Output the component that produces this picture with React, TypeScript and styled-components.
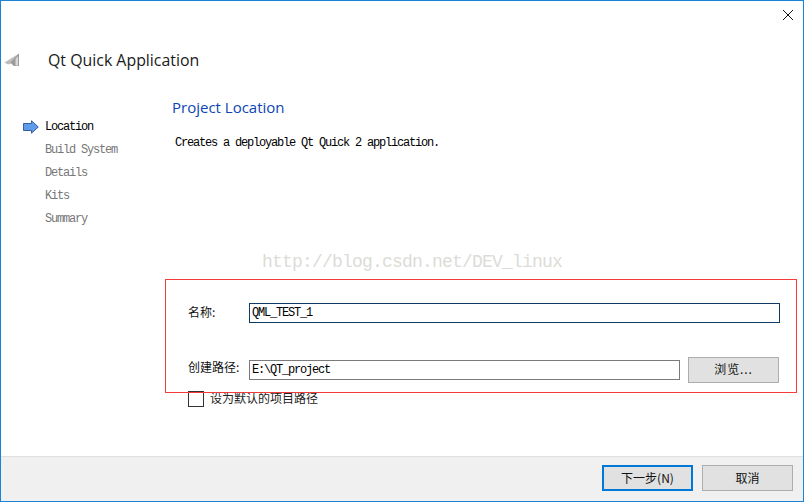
import React from "react";
import styled, { createGlobalStyle } from "styled-components";

const GlobalStyle = createGlobalStyle`
  html, body { margin: 0; padding: 0; background: #fff; }
`;

const mono = `"Liberation Mono", "Noto Sans CJK SC", monospace`;
const cjk = `"Noto Sans CJK SC", "Noto Sans", sans-serif`;

const steps = ["Location", "Build System", "Details", "Kits", "Summary"];

const App = () => {
  return (
    <Window>
      <GlobalStyle />
      <CloseIcon viewBox="0 0 12 12">
        <path d="M1 1l10 10M11 1L1 11" />
      </CloseIcon>
      <Header>
        <PlaneIcon viewBox="0 0 16 14">
          <path d="M0.5 9.5 15 0.5V13H10L7.5 10.5 4 11.5Z" fill="#bdbdbd" />
          <path d="M15 0.5 6.5 9.5 10 13H15Z" fill="#9a9a9a" />
          <path d="M11.5 6V12.5H14V3Z" fill="#d8d8d8" />
        </PlaneIcon>
        <Title>Qt Quick Application</Title>
      </Header>
      <Body>
        <Sidebar>
          {steps.map((s, i) => (
            <Step key={s} $active={i === 0}>
              <StepMarker>
                {i === 0 && (
                  <svg width="16" height="14" viewBox="0 0 16 14">
                    <path
                      d="M0.5 3.5H8.5V0.8L15.3 7 8.5 13.2V10.5H0.5Z"
                      fill="#5f9bea"
                      stroke="#34609f"
                    />
                  </svg>
                )}
              </StepMarker>
              {s}
            </Step>
          ))}
        </Sidebar>
        <Main>
          <PageTitle>Project Location</PageTitle>
          <Description>Creates a deployable Qt Quick 2 application.</Description>
          <Form>
            <Row>
              <Label $lift={4}>名称:</Label>
              <TextField $focused value="QML_TEST_1" readOnly />
            </Row>
            <PathRow>
              <Label $lift={8}>创建路径:</Label>
              <TextField value="E:\QT_project" readOnly />
              <BrowseButton>浏览...</BrowseButton>
            </PathRow>
            <CheckRow>
              <CheckBox />
              <CheckText>设为默认的项目路径</CheckText>
            </CheckRow>
          </Form>
        </Main>
      </Body>
      <Footer>
        <FooterButton $primary>下一步(N)</FooterButton>
        <FooterButton>取消</FooterButton>
      </Footer>
      <Watermark>http://blog.csdn.net/DEV_linux</Watermark>
      <RedBox />
    </Window>
  );
};

export default App;

const Window = styled.div`
  position: relative;
  box-sizing: border-box;
  width: 804px;
  height: 502px;
  border: 1px solid #1883d7;
  background: #fff;
  display: flex;
  flex-direction: column;
  overflow: hidden;
`;

const CloseIcon = styled.svg`
  position: absolute;
  top: 8px;
  right: 9px;
  width: 12px;
  height: 12px;
  fill: none;
  stroke: #111;
  stroke-width: 1;
`;

const Header = styled.div`
  height: 83px;
  flex: none;
  display: flex;
  align-items: center;
  padding: 34px 0 0 3px;
  box-sizing: border-box;
`;

const PlaneIcon = styled.svg`
  width: 16px;
  height: 14px;
  flex: none;
`;

const Title = styled.div`
  margin-left: 28px;
  font: 400 15.9px "Open Sans", "Noto Sans", sans-serif;
  color: #1a1a1a;
`;

const Body = styled.div`
  flex: 1;
  display: flex;
  min-height: 0;
`;

const Sidebar = styled.div`
  width: 171px;
  flex: none;
  padding-top: 31px;
  box-sizing: border-box;
`;

const Step = styled.div<{ $active?: boolean }>`
  display: flex;
  align-items: center;
  height: 23px;
  padding-left: 22px;
  font: 400 12px ${mono};
  letter-spacing: -1.2px;
  color: ${(p) => (p.$active ? "#000" : "#777")};
`;

const StepMarker = styled.span`
  width: 22px;
  flex: none;
  display: flex;
  align-items: center;
`;

const Main = styled.div`
  flex: 1;
  min-width: 0;
`;

const PageTitle = styled.div`
  margin-top: 11px;
  font: 400 15px "Open Sans", "Noto Sans", sans-serif;
  line-height: 24px;
  color: #0b46b4;
`;

const Description = styled.div`
  margin: 16px 0 0 3px;
  font: 400 12px ${mono};
  letter-spacing: -1.2px;
  line-height: 16px;
  color: #000;
`;

const Form = styled.div`
  margin: 152px 0 0 16px;
  display: flex;
  flex-direction: column;
`;

const Row = styled.div`
  display: flex;
  align-items: center;
  height: 20px;
  width: 592px;
`;

const PathRow = styled(Row)`
  margin-top: 34px;
  height: 26px;
  width: 591px;
`;

const Label = styled.span<{ $lift: number }>`
  width: 61px;
  flex: none;
  padding-bottom: ${(p) => p.$lift}px;
  font: 400 12px ${cjk};
  color: #111;
  white-space: nowrap;
`;

const TextField = styled.input<{ $focused?: boolean }>`
  flex: 1;
  min-width: 0;
  height: 20px;
  box-sizing: border-box;
  margin: 0;
  padding: 0 2px;
  outline: none;
  border: 1px solid ${(p) => (p.$focused ? "#0f3b63" : "#7a7a7a")};
  font: 400 12px ${mono};
  letter-spacing: -1.2px;
  color: #000;
`;

const BrowseButton = styled.button`
  width: 91px;
  height: 26px;
  margin-left: 8px;
  flex: none;
  padding: 0 0 4px;
  box-sizing: border-box;
  border: 1px solid #adadad;
  background: #e1e1e1;
  font: 400 12px ${cjk};
  letter-spacing: 0.9px;
  color: #111;
`;

const CheckRow = styled.label`
  display: flex;
  align-items: center;
  gap: 6px;
  margin-top: 8px;
  height: 16px;
`;

const CheckText = styled.span`
  padding-bottom: 4px;
  font: 400 12px ${cjk};
  color: #222;
`;

const CheckBox = styled.span`
  width: 16px;
  height: 16px;
  box-sizing: border-box;
  border: 1px solid #333;
  flex: none;
`;

const Footer = styled.div`
  height: 45px;
  flex: none;
  box-sizing: border-box;
  border-top: 1px solid #dfdfdf;
  background: #f0f0f0;
  display: flex;
  justify-content: flex-end;
  align-items: flex-start;
  gap: 9px;
  padding: 8px 10px 0 0;
`;

const FooterButton = styled.button<{ $primary?: boolean }>`
  width: 91px;
  height: 26px;
  padding: 0 0 2px;
  box-sizing: border-box;
  border: ${(p) => (p.$primary ? "2px solid #0078d7" : "1px solid #adadad")};
  background: #e1e1e1;
  font: 400 12px ${cjk};
  color: #111;
`;

const Watermark = styled.div`
  position: absolute;
  left: 261px;
  top: 251px;
  font: 400 18px ${mono};
  letter-spacing: -0.8px;
  color: #dcdcd8;
  white-space: nowrap;
`;

const RedBox = styled.div`
  position: absolute;
  left: 164px;
  top: 278px;
  width: 632px;
  height: 114px;
  box-sizing: border-box;
  border: 1px solid #f23b3b;
  pointer-events: none;
`;
